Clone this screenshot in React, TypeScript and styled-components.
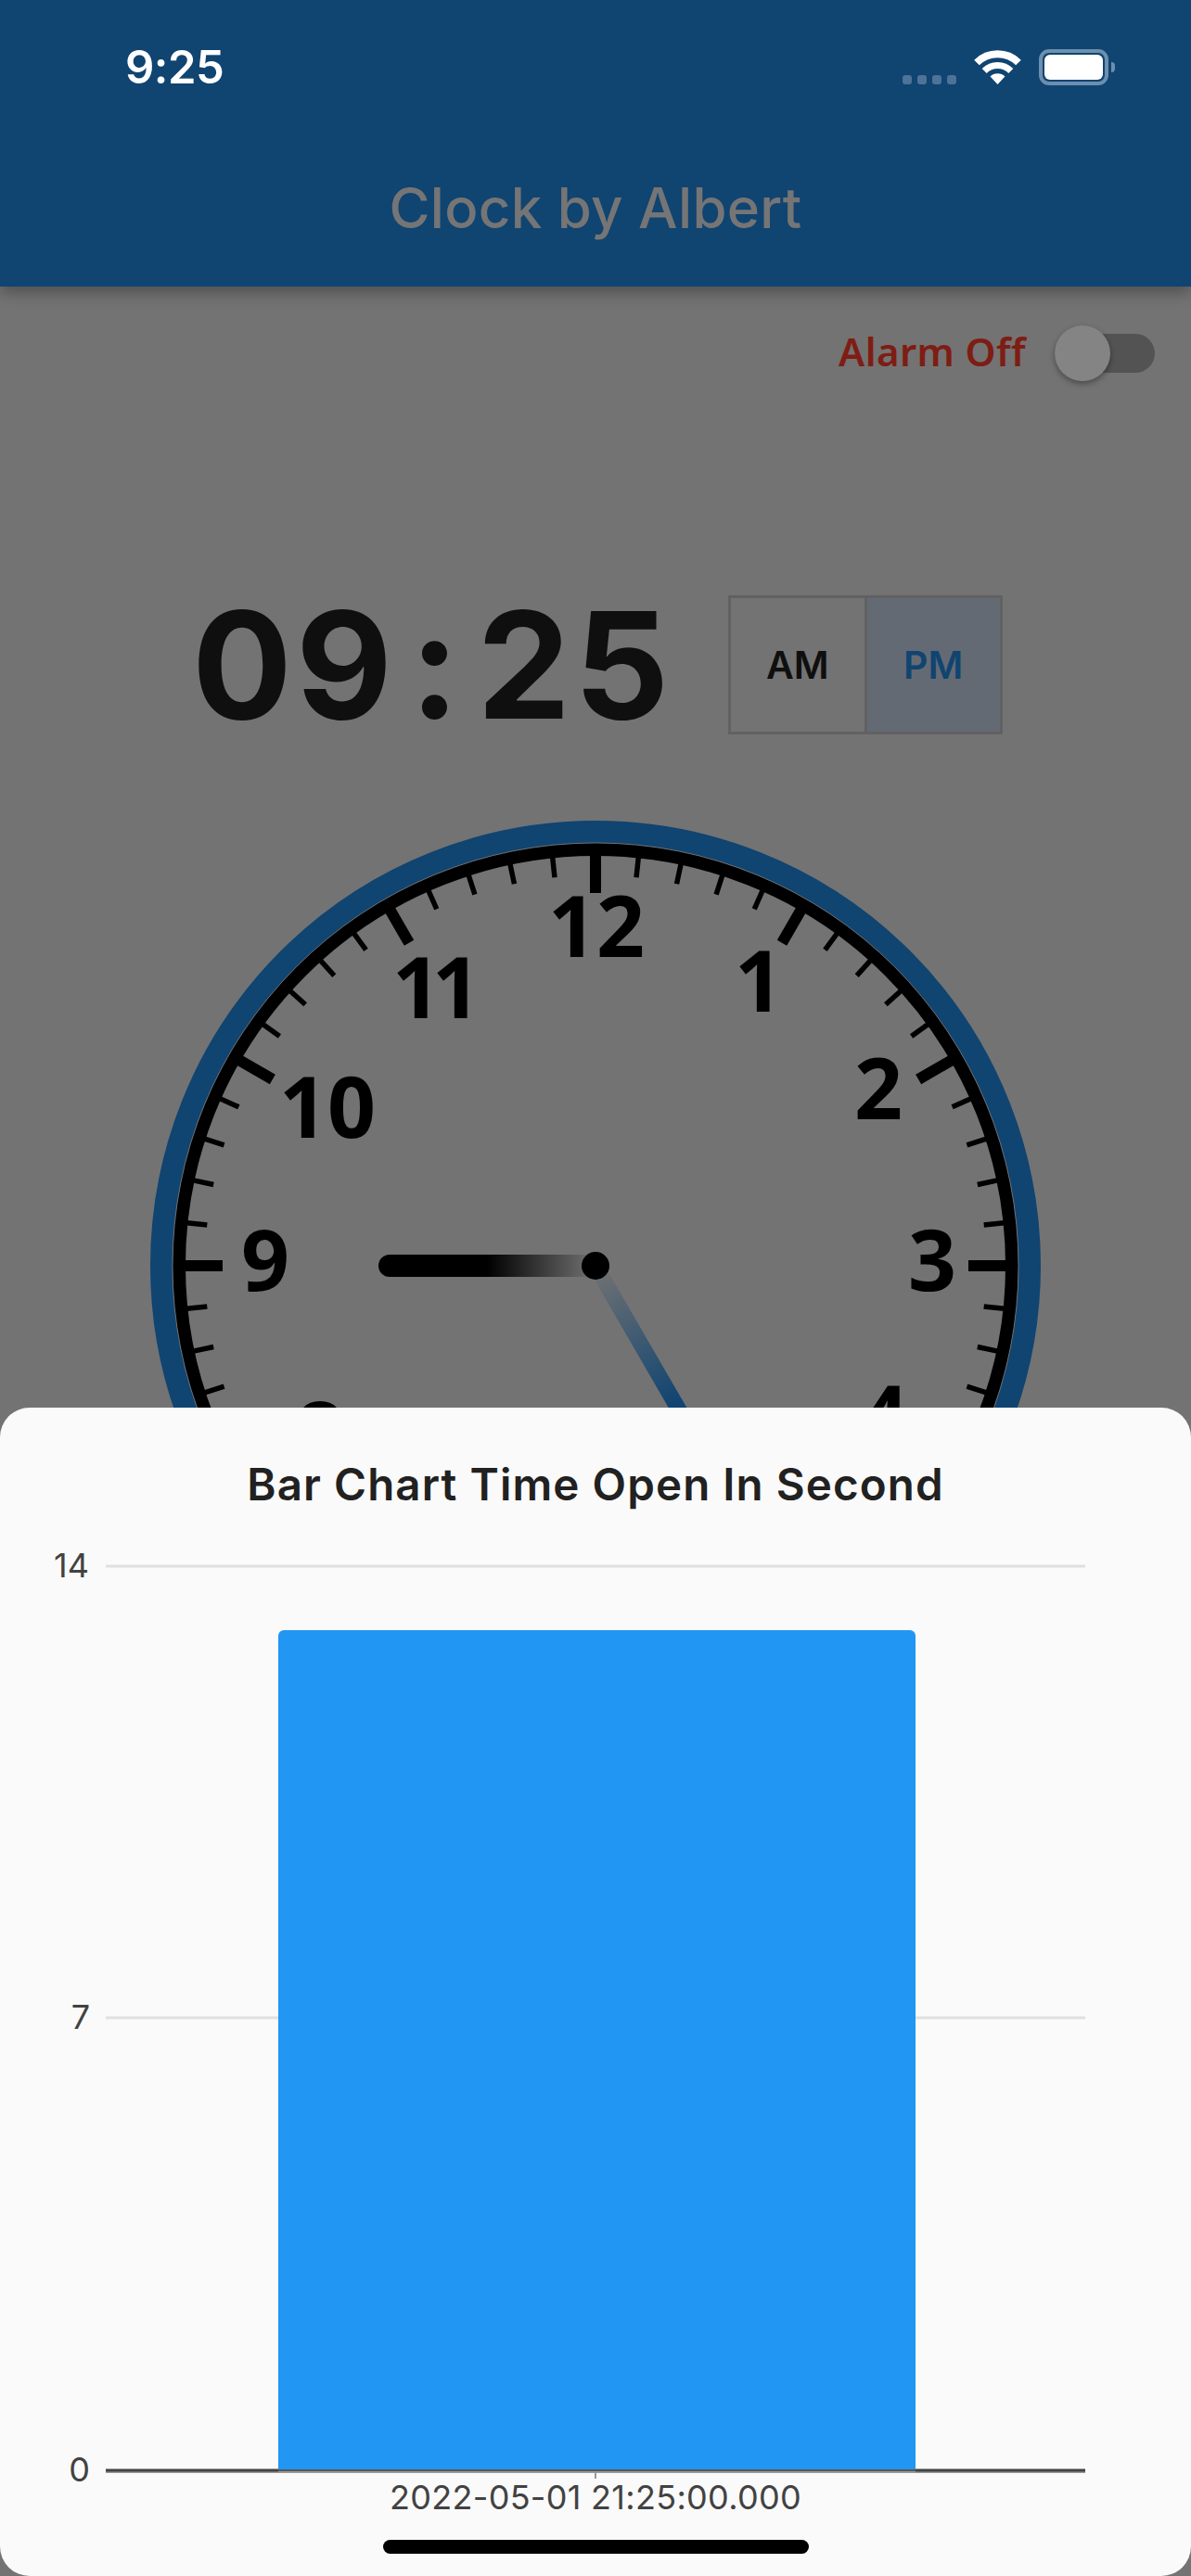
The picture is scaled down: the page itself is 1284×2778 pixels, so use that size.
import React from "react";
import styled, { createGlobalStyle } from "styled-components";

const GlobalStyle = createGlobalStyle`
  html, body { margin: 0; padding: 0; background: #737373; }
  body { font-family: Inter, "Liberation Sans", sans-serif; }
`;

const Screen = styled.div`
  position: relative;
  width: 1284px;
  height: 2778px;
  overflow: hidden;
  background: #737373;
`;

const Header = styled.header`
  position: relative;
  z-index: 1;
  height: 309px;
  background: #104471;
  box-shadow: 0 6px 16px rgba(0, 0, 0, 0.32);
  display: flex;
  flex-direction: column;
`;

const StatusBar = styled.div`
  height: 110px;
  padding: 45px 89px 0 135px;
  box-sizing: border-box;
  display: flex;
  justify-content: space-between;
  align-items: flex-start;
`;

const StatusTime = styled.span`
  font-size: 49px;
  line-height: 56px;
  font-weight: 600;
  color: #fff;
  letter-spacing: -0.5px;
`;

const StatusIcons = styled.div`
  display: flex;
  align-items: flex-end;
  margin-top: 8px;
  height: 39px;
`;

const SignalDots = styled.div`
  display: flex;
  gap: 6px;
  margin: 0 19px 1px 0;
`;

const SignalDot = styled.i`
  display: block;
  width: 10px;
  height: 10px;
  border-radius: 3px;
  background: #4c7398;
`;

const WifiIcon = styled.svg`
  display: block;
  width: 51px;
  height: 37px;
  margin: 0 19px 1px 0;
`;

const Battery = styled.div`
  position: relative;
  box-sizing: border-box;
  width: 75px;
  height: 39px;
  border: 4px solid #6c8fae;
  border-radius: 11px;
  padding: 2px;
`;

const BatteryFill = styled.div`
  width: 100%;
  height: 100%;
  background: #fff;
  border-radius: 6px;
`;

const BatteryNub = styled.div`
  position: absolute;
  left: 74px;
  top: 10px;
  width: 4px;
  height: 11px;
  background: #6c8fae;
  border-radius: 0 6px 6px 0;
`;

const AppTitle = styled.h1`
  margin: 0;
  height: 199px;
  padding-top: 78px;
  box-sizing: border-box;
  text-align: center;
  font-size: 60px;
  line-height: 72px;
  font-weight: 500;
  letter-spacing: 0.3px;
  color: #757575;
`;

const AlarmRow = styled.div`
  height: 60px;
  margin-top: 42px;
  padding-right: 39px;
  display: flex;
  justify-content: flex-end;
  align-items: center;
  gap: 31px;
`;

const AlarmLabel = styled.span`
  font-family: "Noto Sans", sans-serif;
  font-size: 42px;
  line-height: 60px;
  font-weight: 600;
  letter-spacing: 0.4px;
  color: #7e1d14;
  transform: translateY(-2px);
`;

const Switch = styled.div`
  position: relative;
  width: 108px;
  height: 42px;
  border-radius: 21px;
  background: #535353;
`;

const SwitchThumb = styled.div`
  position: absolute;
  left: 0;
  top: -9px;
  width: 60px;
  height: 60px;
  border-radius: 50%;
  background: #848484;
  box-shadow: 0 3px 6px rgba(0, 0, 0, 0.35);
`;

const TimeRow = styled.div`
  margin-top: 231px;
  height: 150px;
  padding-left: 207px;
  display: flex;
  align-items: center;
  gap: 64px;
`;

const DigitalTime = styled.div`
  width: 514px;
  font-size: 160px;
  line-height: 150px;
  font-weight: 700;
  letter-spacing: 4px;
  color: #0f0f0f;
  white-space: nowrap;
`;

const TimeColon = styled.span`
  margin: 0 15px;
`;

const MeridiemBox = styled.div`
  display: flex;
  box-sizing: border-box;
  width: 296px;
  height: 150px;
  border: 3px solid #616161;
`;

const MeridiemCell = styled.div<{ $active?: boolean }>`
  flex: 1;
  display: flex;
  align-items: center;
  justify-content: center;
  font-size: 41px;
  font-weight: 600;
  background: ${(p) => (p.$active ? "#646a73" : "transparent")};
  color: ${(p) => (p.$active ? "#104471" : "#0f0f0f")};
  & + & {
    border-left: 3px solid #616161;
  }
`;

const ClockWrap = styled.div`
  margin-top: 73px;
  display: flex;
  justify-content: center;
`;

const ClockSvg = styled.svg`
  display: block;
  width: 1000px;
  height: 1000px;
  flex: none;
`;

const ClockNumber = styled.text<{ $tight?: boolean }>`
  font-family: "Open Sans", sans-serif;
  font-size: 91px;
  font-weight: 700;
  fill: #000;
  text-anchor: middle;
  letter-spacing: ${(p) => (p.$tight ? "-9px" : "0")};
`;

const Sheet = styled.section`
  position: absolute;
  z-index: 2;
  left: 0;
  right: 0;
  bottom: 0;
  height: 1260px;
  background: #fafafa;
  border-radius: 32px;
`;

const SheetTitle = styled.h2`
  margin: 0;
  padding-top: 54px;
  text-align: center;
  font-size: 47.5px;
  line-height: 58px;
  font-weight: 600;
  letter-spacing: 1.1px;
  color: #212121;
`;

const ChartSvg = styled.svg`
  display: block;
  width: 1284px;
  height: 1148px;
`;

const AxisLabel = styled.text<{ $wide?: boolean }>`
  font-family: Inter, sans-serif;
  font-size: 36px;
  fill: #424242;
  letter-spacing: ${(p) => (p.$wide ? "0.3px" : "0")};
`;

const HomeIndicator = styled.div`
  position: absolute;
  left: 413px;
  bottom: 24px;
  width: 459px;
  height: 15px;
  border-radius: 8px;
  background: #000;
`;

const CX = 500;
const CY = 500;

const numbers: [string, number, number][] = [
  ["12", 643, 1000],
  ["11", 466, 1066],
  ["10", 353, 1195],
  ["9", 286, 1360],
  ["1", 818, 1059],
  ["2", 947, 1175],
  ["3", 1005, 1360],
  ["4", 953, 1528],
  ["8", 345, 1545],
];

function ticks() {
  const out: React.ReactNode[] = [];
  for (let i = 0; i < 60; i++) {
    const a = (i * Math.PI) / 30;
    const major = i % 5 === 0;
    const r1 = major ? 402 : 421;
    const r2 = 448;
    out.push(
      <line
        key={i}
        x1={CX + r1 * Math.sin(a)}
        y1={CY - r1 * Math.cos(a)}
        x2={CX + r2 * Math.sin(a)}
        y2={CY - r2 * Math.cos(a)}
        stroke="#000"
        strokeWidth={major ? 12 : 5.5}
      />
    );
  }
  return out;
}

function Clock() {
  // the clock's centre is (642, 1365) on the page; the svg starts at (142, 865)
  return (
    <ClockSvg viewBox="0 0 1000 1000">
      <defs>
        <linearGradient id="hourHand" gradientUnits="userSpaceOnUse" x1="266" y1="500" x2="500" y2="500">
          <stop offset="0.5" stopColor="#000" />
          <stop offset="1" stopColor="#737373" />
        </linearGradient>
        <linearGradient id="minuteHand" gradientUnits="userSpaceOnUse" x1="500" y1="500" x2="586" y2="650">
          <stop offset="0" stopColor="#737373" />
          <stop offset="1" stopColor="#104471" />
        </linearGradient>
      </defs>
      <circle cx={CX} cy={CY} r={468} fill="none" stroke="#104471" strokeWidth={24} />
      <circle cx={CX} cy={CY} r={449} fill="none" stroke="#000" strokeWidth={14} />
      <circle cx={CX} cy={CY} r={456} fill="none" stroke="#8a8a8a" strokeWidth={0.75} />
      {ticks()}
      {numbers.map(([t, x, y]) => (
        <ClockNumber key={t} x={x - 142} y={y - 865 + 32} $tight={t === "11"}>
          {t}
        </ClockNumber>
      ))}
      <line x1={278} y1={500} x2={500} y2={500} stroke="url(#hourHand)" strokeWidth={24} />
      <circle cx={278} cy={500} r={12} fill="#000" />
      <line x1={500} y1={500} x2={640} y2={742} stroke="url(#minuteHand)" strokeWidth={17} />
      <circle cx={CX} cy={CY} r={15} fill="#000" />
    </ClockSvg>
  );
}

function BarChart() {
  // svg origin on the page is (0, 1630)
  const y = (page: number) => page - 1630;
  return (
    <ChartSvg viewBox="0 0 1284 1148">
      <line x1={114} x2={1170} y1={y(1689)} y2={y(1689)} stroke="#e0e0e0" strokeWidth={3} />
      <line x1={114} x2={1170} y1={y(2176)} y2={y(2176)} stroke="#e0e0e0" strokeWidth={3} />
      <path
        d={`M300 ${y(2664)} V${y(1764)} a6 6 0 0 1 6 -6 H981 a6 6 0 0 1 6 6 V${y(2664)} Z`}
        fill="#2196f3"
      />
      <line x1={114} x2={1170} y1={y(2665)} y2={y(2665)} stroke="#999" strokeWidth={4} />
      <line x1={114} x2={300} y1={y(2664)} y2={y(2664)} stroke="#424242" strokeWidth={3} />
      <line x1={300} x2={987} y1={y(2664)} y2={y(2664)} stroke="#424242" strokeWidth={1.5} />
      <line x1={987} x2={1170} y1={y(2664)} y2={y(2664)} stroke="#424242" strokeWidth={3} />
      <line x1={642} x2={642} y1={y(2666)} y2={y(2673)} stroke="#999" strokeWidth={2} />
      <AxisLabel x={96} y={y(1701)} textAnchor="end">14</AxisLabel>
      <AxisLabel x={97} y={y(2188)} textAnchor="end">7</AxisLabel>
      <AxisLabel x={97} y={y(2676)} textAnchor="end">0</AxisLabel>
      <AxisLabel $wide x={642} y={y(2706)} textAnchor="middle">2022-05-01 21:25:00.000</AxisLabel>
    </ChartSvg>
  );
}

export default function App() {
  return (
    <Screen>
      <GlobalStyle />
      <Header>
        <StatusBar>
          <StatusTime>9:25</StatusTime>
          <StatusIcons>
            <SignalDots>
              <SignalDot />
              <SignalDot />
              <SignalDot />
              <SignalDot />
            </SignalDots>
            <WifiIcon viewBox="0 0 51 37">
              <path d="M25.5 37 L17.5 28.5 A11.5 11.5 0 0 1 33.5 28.5 Z" fill="#fff" />
              <path d="M11.2 22.5 A20 20 0 0 1 39.8 22.5" fill="none" stroke="#fff" strokeWidth={7} />
              <path d="M3 13.5 A32 32 0 0 1 48 13.5" fill="none" stroke="#fff" strokeWidth={8} />
            </WifiIcon>
            <Battery>
              <BatteryFill />
              <BatteryNub />
            </Battery>
          </StatusIcons>
        </StatusBar>
        <AppTitle>Clock by Albert</AppTitle>
      </Header>
      <AlarmRow>
        <AlarmLabel>Alarm Off</AlarmLabel>
        <Switch>
          <SwitchThumb />
        </Switch>
      </AlarmRow>
      <TimeRow>
        <DigitalTime>
          09<TimeColon>:</TimeColon>25
        </DigitalTime>
        <MeridiemBox>
          <MeridiemCell>AM</MeridiemCell>
          <MeridiemCell $active>PM</MeridiemCell>
        </MeridiemBox>
      </TimeRow>
      <ClockWrap>
        <Clock />
      </ClockWrap>
      <Sheet>
        <SheetTitle>Bar Chart Time Open In Second</SheetTitle>
        <BarChart />
        <HomeIndicator />
      </Sheet>
    </Screen>
  );
}
